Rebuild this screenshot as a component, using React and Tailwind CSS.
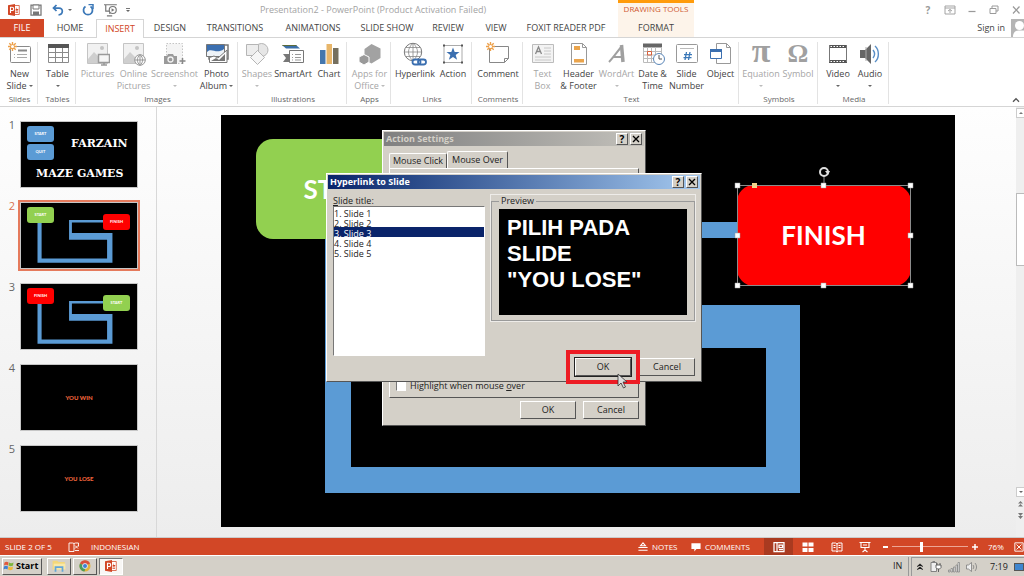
import React, { useState } from 'react';
import clsx from 'clsx';

/* ---------- small shared pieces ---------- */

function Icon({ children, className = 'size-6' }) {
  return (
    <svg viewBox="0 0 24 24" className={clsx('block shrink-0', className)} fill="none" aria-hidden="true">
      {children}
    </svg>
  );
}

function Caret({ className = 'text-[#666]' }) {
  return (
    <svg viewBox="0 0 4 2" className={clsx('inline-block h-0.5 w-1', className)} aria-hidden="true">
      <path d="M0 0h4L2 2z" fill="currentColor" />
    </svg>
  );
}

function Spark() {
  return (
    <g stroke="#eda04a" strokeWidth="1.4">
      <path d="M4.500 0v9M0 4.500h9M1.300 1.300l6.400 6.400M7.700 1.300l-6.400 6.400" />
      <circle cx="4.500" cy="4.500" r="1.500" fill="#fff" stroke="none" />
    </g>
  );
}

function PowerPointLogo({ className }) {
  return (
    <Icon className={className}>
      <path d="M12 3h10.500v18H12z" fill="#fff" stroke="#d24726" strokeWidth="1.500" />
      <path d="M15 14h5M15 17h5" stroke="#d24726" strokeWidth="1.500" />
      <path d="M17 6v4h4a4 4 0 0 1-6 2" fill="#d24726" />
      <path d="M0 2.500 14 0v24L0 21.500z" fill="#d24726" />
      <path d="M5 18V6.500h3.200a3.200 3.200 0 0 1 0 6.500H5" stroke="#fff" strokeWidth="2.200" />
    </Icon>
  );
}

/* ---------- ribbon icons ---------- */

const icons = {
  newSlide: (
    <Icon>
      <rect x="2.500" y="4.500" width="20" height="16" rx="1" stroke="#8a8a8a" fill="#fff" />
      <path d="M10 8.500h9" stroke="#8a8a8a" strokeWidth="2" />
      <path d="M6 12.500h1M9 12.500h10M6 15.500h1M9 15.500h10" stroke="#aaa" />
      <Spark />
    </Icon>
  ),
  table: (
    <Icon>
      <path d="M2 2h21v4H2z" fill="#555" />
      <path d="M2.500 6v14.500h20V6M2.500 10.500h20M2.500 15.500h20M9.500 6v14M16.500 6v14" stroke="#8a8a8a" />
    </Icon>
  ),
  pictures: (
    <Icon>
      <path d="M1.500 1.500h20v20h-20z" fill="#f1f1f1" stroke="#c4c4c4" />
      <circle cx="16" cy="6" r="2" fill="#c4c4c4" />
      <path d="M2 17l6-7 7 7v4H2z" fill="#cfcfcf" />
      <path d="M12.500 12.500h11v8h-11zM15 23h6M18 20v3" fill="#f6f6f6" stroke="#9a9a9a" strokeWidth="1.500" />
    </Icon>
  ),
  online: (
    <Icon>
      <path d="M1.500 1.500h20v20h-20z" fill="#f1f1f1" stroke="#c4c4c4" />
      <circle cx="15" cy="6" r="2" fill="#c4c4c4" />
      <path d="M2 17l6-7 7 7v4H2z" fill="#cfcfcf" />
      <circle cx="18" cy="18" r="5.300" fill="#fafafa" stroke="#999" />
      <path d="M12.700 18h10.600M18 12.700v10.600M18 12.700c-3.500 3-3.500 7.600 0 10.600M18 12.700c3.500 3 3.500 7.600 0 10.600" stroke="#999" />
    </Icon>
  ),
  screenshot: (
    <Icon>
      <path d="M3.500 1.500h16v20h-16z" fill="#f4f4f4" stroke="#c4c4c4" strokeDasharray="1.500 1.500" />
      <path d="M1 14h3l1-2h5l1 2h3v8H1z" fill="#9a9a9a" />
      <circle cx="7.500" cy="17.500" r="2.500" fill="#9a9a9a" stroke="#f1f1f1" strokeWidth="1.300" />
      <path d="M19.500 16v6M16.500 19h6" stroke="#888" strokeWidth="1.500" />
    </Icon>
  ),
  album: (
    <Icon>
      <path d="M4 3h19v14H4z" fill="#fff" stroke="#777" strokeWidth="1.500" />
      <path d="M1.500 2.500h18v12h-18z" fill="#3b6fb0" stroke="#777" />
      <path d="M2 10c5-5 9 3 17-3v7H2z" fill="#eef3f8" />
      <path d="M4.500 20.500v-5L9 14l4 2 9-8v12.500z" fill="#fff" stroke="#777" />
      <path d="M6 19l5-3 3 2 6-6v7z" fill="#777" />
    </Icon>
  ),
  shapes: (
    <Icon>
      <circle cx="16.500" cy="8" r="6.500" fill="#e6e6e6" stroke="#b5b5b5" />
      <path d="M1.500 2.500h12v11h-12z" fill="#ededed" stroke="#b5b5b5" />
      <path d="m12.500 8.500 7 7-7 7-7-7z" fill="#f6f6f6" stroke="#b5b5b5" />
    </Icon>
  ),
  smartArt: (
    <Icon>
      <path d="M1 3h14l4 3.500H5z" fill="#3b6fa8" />
      <path d="M1 3h14l1 1H2z" fill="#5c6b3a" />
      <path d="M2 12h7v8H2l3-4z" fill="#777" />
      <path d="M8.500 8.500h14v12h-14z" fill="#fff" stroke="#777" />
      <path d="M11 12.500h1M14 12.500h6M11 15.500h1M14 15.500h6M11 18h1M14 18h6" stroke="#999" />
    </Icon>
  ),
  chart: (
    <Icon>
      <path d="M3 8h5.500v14H3z" fill="#4577ad" />
      <path d="M9.500 2H15v20H9.500z" fill="#e8b66a" />
      <path d="M16 6h5.500v16H16z" fill="#76705f" />
    </Icon>
  ),
  apps: (
    <Icon>
      <path d="m13.500 2 9 4.500v9.500l-9 5.500-7-4V7z" fill="#a2a2a2" />
      <path d="m6 12.500 5 2.500v5l-5 3-5-3v-5z" fill="#9a9a9a" stroke="#fff" />
    </Icon>
  ),
  hyperlink: (
    <Icon>
      <circle cx="10" cy="10" r="8.700" fill="#fff" stroke="#777" />
      <path d="M1.500 10h17M3 5.500h14M3 14.500h14M10 1.300v17.400M10 1.300c-6 5-6 12.400 0 17.400M10 1.300c6 5 6 12.400 0 17.400" stroke="#888" strokeWidth="0.800" />
      <rect x="9.500" y="17.500" width="8" height="5" rx="2.500" stroke="#3b6fb0" strokeWidth="1.800" fill="#fff" />
      <rect x="15" y="17.500" width="8" height="5" rx="2.500" stroke="#3b6fb0" strokeWidth="1.800" />
    </Icon>
  ),
  action: (
    <Icon>
      <path d="M3 3.500h18v17H3z" stroke="#aaa" />
      <path d="M2 2.500h2v2H2zM20 2.500h2v2h-2zM2 19.500h2v2H2zM20 19.500h2v2h-2z" fill="#555" />
      <path d="m12 5.500 1.700 4.600h4.800l-3.800 3 1.400 4.600-4.100-2.800-4.100 2.800 1.400-4.600-3.800-3h4.800z" fill="#3b6fb0" />
    </Icon>
  ),
  comment: (
    <Icon>
      <path d="M3.500 4.500h19v12l-4 4h-15z" fill="#fff" stroke="#888" />
      <path d="M22.500 16.500h-4v4" stroke="#888" />
      <Spark />
    </Icon>
  ),
  textBox: (
    <Icon>
      <path d="M1.500 2.500h21v18h-21z" fill="#f3f3f3" stroke="#bcbcbc" />
      <path d="m4.500 12 3-7 3 7M5.500 9.500h4" stroke="#888" strokeWidth="1.300" />
      <path d="M13 6h7M13 9h7M13 12h7M4 15h16M4 18h16" stroke="#c8c8c8" />
    </Icon>
  ),
  headerFooter: (
    <Icon>
      <path d="M4.500 1.500h11l4 4v17h-15z" fill="#fff" stroke="#999" />
      <path d="M15.500 1.500v4h4" stroke="#999" />
      <path d="M7 4h6v4H7zM7 17h10v3.500H7z" fill="#eaa44c" />
    </Icon>
  ),
  wordArt: (
    <Icon>
      <path d="M4 20C8 16 12 10 17 4" stroke="#a0a0a0" strokeWidth="2" />
      <path d="M16.500 3 18 20" stroke="#a0a0a0" strokeWidth="3.500" />
      <path d="M8 15h10" stroke="#a0a0a0" strokeWidth="2" />
    </Icon>
  ),
  date: (
    <Icon>
      <path d="M2 1.500h19v4H2z" fill="#666" />
      <path d="M2.500 5v15.500h18V5M2.500 9.500h18M2.500 13h18M2.500 16.500h18M6.500 5v15M10.500 5v15M14.500 5v15" stroke="#bbb" />
      <path d="M6.500 9.500h4v3.500h-4z" stroke="#d9603a" />
      <circle cx="18" cy="17" r="5.500" fill="#fff" stroke="#5a86b8" />
      <path d="M18 13v4h3" stroke="#555" />
    </Icon>
  ),
  slideNumber: (
    <Icon>
      <rect x="1.500" y="2.500" width="21" height="18" rx="1" fill="#fff" stroke="#999" />
      <path d="M5 6.500h14" stroke="#bbb" />
      <path d="m11.500 10-1.500 8M15 10l-1.500 8M9 12.700h8M8.500 15.700h8" stroke="#3b78b8" strokeWidth="1.300" />
    </Icon>
  ),
  object: (
    <Icon>
      <path d="M7.500 1.500h10l4 4v16h-14z" fill="#fff" stroke="#999" />
      <path d="M17.500 1.500v4h4" stroke="#999" />
      <path d="M1.500 7.500h11v9h-11z" fill="#fff" stroke="#3b6fb0" />
      <path d="M1 7h12v3H1z" fill="#3b6fb0" />
    </Icon>
  ),
  equation: <span className="h-6 font-['Liberation_Serif',serif] text-[34px] leading-[18px] font-bold text-[#a0a0a0]">π</span>,
  symbol: <span className="h-6 font-['Liberation_Serif',serif] text-[26px] leading-6 font-bold text-[#a0a0a0]">Ω</span>,
  video: (
    <Icon>
      <path d="M3 3h18v3H3zM3 18h18v3H3z" fill="#555" />
      <path d="M3.500 3v17M20.500 3v17" stroke="#777" />
      <path d="M4.500 4.500h15M4.500 19.500h15" stroke="#fff" strokeDasharray="1.500 1.500" />
    </Icon>
  ),
  audio: (
    <Icon>
      <path d="M2 8h5l6-6v20l-6-6H2z" fill="#666" />
      <path d="M8 5v14" stroke="#aaa" />
      <path d="M15 8c2 2.500 2 5.500 0 8M17 4c4.500 4 4.500 12 0 16" stroke="#5a8fc6" strokeWidth="1.400" />
    </Icon>
  ),
};

const ribbon = [
  { name: 'Slides', width: 'w-[38px]', items: [{ icon: 'newSlide', lines: ['New', 'Slide'], caret: true, width: 'w-9' }] },
  { name: 'Tables', width: 'w-[38px]', items: [{ icon: 'table', lines: ['Table'], caret: true, width: 'w-9' }] },
  {
    name: 'Images',
    width: 'w-[162px]',
    items: [
      { icon: 'pictures', lines: ['Pictures'], off: true, width: 'w-9' },
      { icon: 'online', lines: ['Online', 'Pictures'], off: true, width: 'w-9' },
      { icon: 'screenshot', lines: ['Screenshot'], caret: true, off: true, width: 'w-[46px]' },
      { icon: 'album', lines: ['Photo', 'Album'], caret: true, width: 'w-[38px]' },
    ],
  },
  {
    name: 'Illustrations',
    width: 'w-[109px]',
    items: [
      { icon: 'shapes', lines: ['Shapes'], caret: true, off: true, width: 'w-[34px]' },
      { icon: 'smartArt', lines: ['SmartArt'], width: 'w-[38px]' },
      { icon: 'chart', lines: ['Chart'], width: 'w-[34px]' },
    ],
  },
  { name: 'Apps', width: 'w-11', items: [{ icon: 'apps', lines: ['Apps for', 'Office'], caret: true, off: true, width: 'w-[42px]' }] },
  {
    name: 'Links',
    width: 'w-[81px]',
    items: [
      { icon: 'hyperlink', lines: ['Hyperlink'], width: 'w-[42px]' },
      { icon: 'action', lines: ['Action'], width: 'w-[34px]' },
    ],
  },
  { name: 'Comments', width: 'w-[51px]', items: [{ icon: 'comment', lines: ['Comment'], width: 'w-[46px]' }] },
  {
    name: 'Text',
    width: 'w-[216px]',
    items: [
      { icon: 'textBox', lines: ['Text', 'Box'], off: true, width: 'w-[34px]' },
      { icon: 'headerFooter', lines: ['Header', '& Footer'], width: 'w-[38px]' },
      { icon: 'wordArt', lines: ['WordArt'], caret: true, off: true, width: 'w-[38px]' },
      { icon: 'date', lines: ['Date &', 'Time'], width: 'w-[34px]' },
      { icon: 'slideNumber', lines: ['Slide', 'Number'], width: 'w-[34px]' },
      { icon: 'object', lines: ['Object'], width: 'w-[34px]' },
    ],
  },
  {
    name: 'Symbols',
    width: 'w-[79px]',
    items: [
      { icon: 'equation', lines: ['Equation'], caret: true, off: true, width: 'w-[38px]' },
      { icon: 'symbol', lines: ['Symbol'], off: true, width: 'w-9' },
    ],
  },
  {
    name: 'Media',
    width: 'w-[71px]',
    items: [
      { icon: 'video', lines: ['Video'], caret: true, width: 'w-8' },
      { icon: 'audio', lines: ['Audio'], caret: true, width: 'w-8' },
    ],
  },
];

const tabs = [
  { label: 'HOME', width: 'w-[52px]' },
  { label: 'INSERT', width: 'w-12', active: true },
  { label: 'DESIGN', width: 'w-[52px]' },
  { label: 'TRANSITIONS', width: 'w-[78px]' },
  { label: 'ANIMATIONS', width: 'w-[78px]' },
  { label: 'SLIDE SHOW', width: 'w-[70px]' },
  { label: 'REVIEW', width: 'w-[52px]' },
  { label: 'VIEW', width: 'w-[44px]' },
  { label: 'FOXIT READER PDF', width: 'w-24' },
];

/* ---------- header ---------- */

function TitleBar() {
  return (
    <div className="flex h-[19px] items-stretch">
      <div className="flex w-[618px] shrink-0 items-center">
        <div className="flex w-[128px] items-center pl-2">
          <PowerPointLogo className="size-3" />
          <button aria-label="Save" className="ml-2.5">
            <Icon className="size-3">
              <path d="M2 2h20v20H2z" stroke="#777" strokeWidth="2.500" />
              <path d="M6 2h12v8H6z" fill="#fff" stroke="#777" strokeWidth="2" />
              <path d="M6 15h12v7H6z" fill="#777" />
            </Icon>
          </button>
          <button aria-label="Undo" className="ml-2.5 flex items-center gap-1">
            <Icon className="size-3">
              <path d="M9 2 3 8l6 6M3 8h11c9 0 9 13-1 14" stroke="#3b78b8" strokeWidth="3.500" />
            </Icon>
            <Caret />
          </button>
          <button aria-label="Redo" className="ml-2.5">
            <Icon className="size-3">
              <path d="M7 5a9 9 0 1 0 10 0" stroke="#3b78b8" strokeWidth="3.500" />
              <path d="M13 1h9v9" stroke="#3b78b8" strokeWidth="3" />
            </Icon>
          </button>
          <button aria-label="Start slide show" className="ml-2.5">
            <Icon className="size-3.5">
              <path d="M0 3h22M3 4v10h6M10 14v5M5 22h9" stroke="#777" strokeWidth="2" />
              <circle cx="15" cy="12" r="6" fill="#fff" stroke="#777" strokeWidth="2" />
              <path d="m13 9 5 3-5 3z" fill="#777" />
            </Icon>
          </button>
          <button aria-label="Customize toolbar" className="ml-2 flex flex-col items-center gap-px">
            <span className="h-px w-1 bg-[#777]" />
            <Caret />
          </button>
        </div>
        <h1 className="flex-1 text-center text-[9px] text-[#a3a3a3]">Presentation2 - PowerPoint (Product Activation Failed)</h1>
      </div>
      <div className="w-[76px] shrink-0 border-t-[3px] border-[#ff9b0b] bg-[#fdf4ea] text-center text-[8px] leading-3 whitespace-nowrap text-[#cf5a33]">
        DRAWING TOOLS
      </div>
      <div className="ml-auto flex w-[102px] items-center justify-between pr-0.5 text-[#9a9a9a]">
        <button aria-label="Help" className="w-3 text-[10px] font-bold leading-3">?</button>
        <button aria-label="Ribbon display options">
          <Icon className="size-3">
            <path d="M2 4h20v16H2zM2 8h20M12 18v-7M8 14l4-3 4 3" stroke="currentColor" strokeWidth="1.800" />
          </Icon>
        </button>
        <button aria-label="Minimize">
          <Icon className="size-3">
            <path d="M5 15h14" stroke="currentColor" strokeWidth="2.500" />
          </Icon>
        </button>
        <button aria-label="Restore">
          <Icon className="size-3">
            <path d="M8 8V4h12v10h-4M4 9h12v10H4z" stroke="currentColor" strokeWidth="2" />
          </Icon>
        </button>
        <button aria-label="Close">
          <Icon className="size-3">
            <path d="m6 5 13 14M19 5 6 19" stroke="currentColor" strokeWidth="2.500" />
          </Icon>
        </button>
      </div>
    </div>
  );
}

function TabRow() {
  return (
    <nav className="flex h-[19px] items-stretch border-b border-[#d5d5d5] text-[9px] text-[#444]">
      <button className="w-11 shrink-0 bg-[#d24726] text-white">FILE</button>
      {tabs.map((tab) => (
        <button
          key={tab.label}
          className={clsx(
            'shrink-0 whitespace-nowrap',
            tab.width,
            tab.active && '-mb-px border border-b-0 border-[#d5d5d5] bg-white text-[#d24726]',
          )}
        >
          {tab.label}
        </button>
      ))}
      <div className="w-1 shrink-0" />
      <button className="w-[76px] shrink-0 bg-[#fdf4ea]">FORMAT</button>
      <a href="#signin" className="ml-auto flex items-center gap-1.5 whitespace-nowrap">
        Sign in
        <svg viewBox="0 0 13 18" className="h-[18px] w-[13px]" aria-hidden="true">
          <path d="M0 0h13v18H0z" fill="#b5b5b5" />
          <circle cx="8.500" cy="6.500" r="4.500" fill="#fff" />
          <path d="M2 18c0-5 3-7 6.500-6.500H13V18z" fill="#fff" />
        </svg>
      </a>
    </nav>
  );
}

function RibbonItem({ icon, lines, caret, off, width }) {
  return (
    <button className={clsx('flex shrink-0 flex-col items-center', width, off ? 'text-[#a6a6a6]' : 'text-[#444]')}>
      {icons[icon]}
      <span className="mt-0.5 whitespace-nowrap">{lines[0]}</span>
      <span className="flex h-3 items-center gap-0.5 whitespace-nowrap">
        {lines[1]}
        {caret && <Caret className={off ? 'text-[#bbb]' : 'text-[#666]'} />}
      </span>
    </button>
  );
}

function Ribbon() {
  return (
    <div className="flex h-[69px] border-b border-[#d5d5d5] pt-1 pb-0.5 text-[9px] leading-3">
      {ribbon.map((group) => (
        <section key={group.name} className={clsx('flex shrink-0 flex-col border-r border-[#e3e3e3] pl-0.5', group.width)}>
          <div className="flex flex-1 justify-center">
            {group.items.map((item) => (
              <RibbonItem key={item.icon} {...item} />
            ))}
          </div>
          <div className="text-center text-[8px] leading-[10px] text-[#666]">{group.name}</div>
        </section>
      ))}
      <button aria-label="Collapse the ribbon" className="mt-auto ml-auto pr-1">
        <Icon className="size-2">
          <path d="m3 17 9-9 9 9" stroke="#555" strokeWidth="4" />
        </Icon>
      </button>
    </div>
  );
}

/* ---------- slides ---------- */

function Maze() {
  return (
    <svg viewBox="0 0 734 412" className="absolute inset-0 size-full" aria-hidden="true">
      <path
        d="M104 110h26v242h415V233H304V107h240v16H322v67h257v188H104z"
        fill="#5b9bd5"
      />
    </svg>
  );
}

function MiniShape({ label, className }) {
  return (
    <span
      className={clsx(
        'absolute flex h-4 w-[27px] items-center justify-center rounded-[3px] text-[4px] font-bold text-white',
        className,
      )}
    >
      {label}
    </span>
  );
}

const slides = [
  <>
    <MiniShape label="START" className="left-1.5 top-1 bg-[#5b9bd5]" />
    <MiniShape label="QUIT" className="left-1.5 top-[22px] bg-[#5b9bd5]" />
    <span className="absolute left-[50px] top-4 font-['DejaVu_Serif',serif] text-[11px] leading-3 font-bold text-white">FARZAIN</span>
    <span className="absolute left-[15px] top-[46px] font-['DejaVu_Serif',serif] text-[11px] leading-3 font-bold whitespace-nowrap text-white">
      MAZE GAMES
    </span>
  </>,
  <>
    <Maze />
    <MiniShape label="START" className="left-1.5 top-1 bg-[#92d050]" />
    <MiniShape label="FINISH" className="left-[82px] top-[11px] bg-[#f00]" />
  </>,
  <>
    <Maze />
    <MiniShape label="FINISH" className="left-1.5 top-1 bg-[#f00]" />
    <MiniShape label="START" className="left-[82px] top-[11px] bg-[#92d050]" />
  </>,
  <span className="text-[6px] font-black text-[#f0643c]">YOU WIN</span>,
  <span className="text-[6px] font-black text-[#f0643c]">YOU LOSE</span>,
];

function Thumbnails() {
  return (
    <aside className="w-[157px] shrink-0 border-r border-[#d8d8d8] pt-3">
      <ol className="flex flex-col gap-2.5">
        {slides.map((content, i) => (
          <li key={i} className="flex">
            <span className={clsx('w-[18px] pr-[3px] text-right text-[11px] leading-3', i === 1 ? 'text-[#d9704f]' : 'text-[#666]')}>
              {i + 1}
            </span>
            <button
              aria-label={`Slide ${i + 1}`}
              className={clsx('border-2 font-[Lato,sans-serif]', i === 1 ? 'border-[#e57a5c]' : 'border-transparent')}
            >
              <span className="relative flex h-[67px] w-[118px] items-center justify-center overflow-hidden border border-[#c6c6c6] bg-black">
                {content}
              </span>
            </button>
          </li>
        ))}
      </ol>
    </aside>
  );
}

function SelectionFrame() {
  return (
    <svg viewBox="0 0 182 124" className="absolute -left-1 -top-5 h-[124px] w-[182px]" aria-hidden="true">
      <path d="M4.500 20.500h173v100H4.500zM91 11v9" fill="none" stroke="#8c8c8c" />
      <circle cx="91" cy="7" r="4" fill="none" stroke="#ddd" strokeWidth="2" />
      <path d="m92 6 5 0-2 4z" fill="#ddd" />
      <path d="M2 18h5v5H2zM88 18h5v5h-5zM175 18h5v5h-5zM2 68h5v5H2zM175 68h5v5h-5zM2 118h5v5H2zM88 118h5v5h-5zM175 118h5v5h-5z" fill="#fff" stroke="#999" strokeWidth="0.500" />
      <path d="M19 18h5v5h-5z" fill="#f3d38b" />
    </svg>
  );
}

function SlideCanvas() {
  return (
    <main className="flex min-w-0 flex-1 justify-center pt-2 pl-0.5">
      <div className="relative mb-2.5 h-[412px] w-[734px] shrink-0 bg-black font-[Lato,sans-serif] text-[26px] font-bold text-white">
        <Maze />
        <div className="absolute left-[35px] top-6 flex h-[100px] w-[174px] items-center justify-center rounded-[17px] bg-[#92d050]">
          START
        </div>
        <div className="absolute left-[516px] top-[70px] flex h-[101px] w-[174px] items-center justify-center rounded-[17px] bg-[#f00]">
          FINISH
          <SelectionFrame />
        </div>
      </div>
    </main>
  );
}

function ScrollBar() {
  return (
    <div className="flex w-2 shrink-0 flex-col bg-[#efefef] text-[#777]" aria-hidden="true">
      <div className="mt-px flex h-2.5 items-center justify-center border border-r-0 border-[#ccc] bg-white">
        <Caret className="rotate-180" />
      </div>
      <div className="mt-[75px] h-[73px] border border-r-0 border-[#bbb] bg-white" />
      <div className="mt-auto flex h-2.5 items-center justify-center border border-r-0 border-[#ccc] bg-white">
        <Caret />
      </div>
      <div className="flex h-10 flex-col items-center gap-1.5 pt-1">
        <svg viewBox="0 0 5 6" className="h-1.5 w-[5px]">
          <path d="M2.500 0 5 2.500H0zM2.500 3 5 5.500H0z" fill="currentColor" />
        </svg>
        <svg viewBox="0 0 5 6" className="h-1.5 w-[5px]">
          <path d="M2.500 3 5 0H0zM2.500 6 5 3H0z" fill="currentColor" />
        </svg>
      </div>
    </div>
  );
}

/* ---------- dialogs ---------- */

const raised = 'border border-t-white border-l-white border-r-[#555] border-b-[#555] bg-[#d4d0c8]';
const sunken = 'border border-t-[#777] border-l-[#777] border-r-white border-b-white';

function DialogButton({ children, isDefault = false }) {
  return (
    <button className={clsx('h-[18px] w-14 text-center', raised, isDefault && 'outline outline-[#222]')}>{children}</button>
  );
}

function DialogTitle({ children, active }) {
  return (
    <div
      className={clsx(
        'flex h-3.5 items-center gap-0.5 bg-linear-to-r px-0.5 font-bold',
        active ? 'from-[#0a246a] to-[#a6caf0] text-white' : 'from-[#808080] to-[#c3c1bb] text-[#d4d0c8]',
      )}
    >
      <span className="flex-1">{children}</span>
      <button aria-label="Help" className={clsx('flex size-3 items-center justify-center text-[10px] leading-none text-black', raised)}>
        ?
      </button>
      <button aria-label="Close" className={clsx('flex size-3 items-center justify-center text-black', raised)}>
        <Icon className="size-2">
          <path d="m3 3 18 18M21 3 3 21" stroke="currentColor" strokeWidth="4" />
        </Icon>
      </button>
    </div>
  );
}

function ActionSettingsDialog() {
  return (
    <section
      aria-label="Action Settings"
      className={clsx('absolute left-[382px] top-[130px] flex h-[296px] w-[264px] flex-col p-px text-[9px] leading-3 text-[#222]', raised)}
    >
      <DialogTitle>Action Settings</DialogTitle>
      <div className="flex flex-1 flex-col px-[5px] pt-[5px] pb-[5px]">
        <div className="flex items-end">
          <button className={clsx('h-[15px] w-[58px] rounded-t-xs border-b-0 whitespace-nowrap', raised)}>Mouse Click</button>
          <button className={clsx('-mb-px h-[18px] w-[61px] rounded-t-xs whitespace-nowrap', raised, 'border-b-[#d4d0c8]')}>Mouse Over</button>
        </div>
        <div className={clsx('mb-[3px] flex flex-1 items-end px-1.5 pb-[5px]', raised)}>
          <label className="flex items-center gap-1">
            <input type="checkbox" className={clsx('size-2.5 appearance-none bg-white', sunken)} />
            <span>
              Highlight when mouse <u>o</u>ver
            </span>
          </label>
        </div>
        <div className="flex justify-end gap-[7px]">
          <DialogButton>OK</DialogButton>
          <DialogButton>Cancel</DialogButton>
        </div>
      </div>
    </section>
  );
}

function HyperlinkDialog() {
  const [slide, setSlide] = useState('3');

  return (
    <section
      aria-label="Hyperlink to Slide"
      className={clsx('absolute left-[326px] top-[173px] flex h-[209px] w-[376px] flex-col p-px text-[9px] leading-3 text-[#222]', raised)}
    >
      <DialogTitle active>Hyperlink to Slide</DialogTitle>
      <div className="flex flex-1 justify-between px-[5px] pt-1.5 pb-1">
        <div className="flex flex-col">
          <label htmlFor="slide-title" className="leading-[11px]">
            <u>S</u>lide title:
          </label>
          <select
            id="slide-title"
            size={14}
            value={slide}
            onChange={(e) => setSlide(e.target.value)}
            className={clsx('h-[150px] w-[152px] appearance-none overflow-hidden bg-white outline-none', sunken)}
          >
            {[1, 2, 3, 4, 5].map((n) => (
              <option
                key={n}
                value={n}
                className="h-2.5 min-h-0 p-0 text-[9px] leading-[10px] text-[#222] checked:bg-[linear-gradient(#0a246a,#0a246a)] checked:text-white"
              >
                {n}. Slide {n}
              </option>
            ))}
          </select>
        </div>
        <div className="flex w-[204px] flex-col justify-between">
          <fieldset className="border border-[#9a9a9a] px-[7px] pt-0.5 pb-[5px] outline outline-white/60">
            <legend className="px-0.5 leading-3">Preview</legend>
            <div className="h-[106px] bg-black px-2 pt-1.5 font-['Liberation_Sans',sans-serif] text-[22px] leading-[26px] font-bold text-white">
              PILIH PADA
              <br />
              SLIDE
              <br />
              "YOU LOSE"
            </div>
          </fieldset>
          <div className="flex justify-end gap-2">
            <DialogButton isDefault>OK</DialogButton>
            <DialogButton>Cancel</DialogButton>
          </div>
        </div>
      </div>
      {/* highlight round the OK button, with the mouse pointer */}
      <div className="pointer-events-none absolute right-[61px] bottom-[-3px] h-[34px] w-[74px] border-4 border-[#ed1c24]" />
      <svg viewBox="0 0 10 16" className="pointer-events-none absolute left-[290px] top-[199px] h-4 w-2.5" aria-hidden="true">
        <path d="M1 1v12l3-3 2.500 5 2-1L6 9h4z" fill="#ddd" stroke="#333" strokeWidth="0.800" />
      </svg>
    </section>
  );
}

/* ---------- bottom bars ---------- */

function StatusBar() {
  return (
    <footer className="flex h-[17px] shrink-0 items-center bg-[#d24726] text-[8px] leading-3 whitespace-nowrap text-white">
      <span className="w-[68px] pl-[5px]">SLIDE 2 OF 5</span>
      <Icon className="size-3">
        <path d="M12 5v16H2V4h7zM12 5l3-1h6v7M22 19h-8" stroke="currentColor" strokeWidth="1.800" />
        <path d="m14 9 6 6M20 9l-6 6" stroke="currentColor" strokeWidth="1.800" />
      </Icon>
      <span className="pl-[11px]">INDONESIAN</span>
      <div className="ml-auto flex h-full items-center">
        <button className="flex w-[53px] items-center gap-1">
          <Icon className="size-2.5">
            <path d="M12 2 6 9h12zM1 13h22M1 20h22" stroke="currentColor" strokeWidth="2.500" />
          </Icon>
          NOTES
        </button>
        <button className="flex w-[73px] items-center gap-1">
          <Icon className="size-2.5">
            <path d="M1 3h22v14H13l-5 6v-6H1z" fill="currentColor" />
          </Icon>
          COMMENTS
        </button>
        <button aria-label="Normal view" className="flex h-full w-[29px] items-center justify-center bg-[#a93a20]">
          <Icon className="size-3">
            <path d="M2 3h20v18H2zM8 3v18M12 8h7v5h-7zM12 17h8" stroke="currentColor" strokeWidth="2.500" />
          </Icon>
        </button>
        <button aria-label="Slide sorter" className="flex w-[29px] justify-center">
          <Icon className="size-3">
            <path d="M1 3h10v8H1zM13 3h10v8H13zM1 14h10v8H1zM13 14h10v8H13z" fill="currentColor" />
          </Icon>
        </button>
        <button aria-label="Reading view" className="flex w-[29px] justify-center">
          <Icon className="size-3">
            <path d="M12 5v17M2 4h7l3 2 3-2h7v16h-7l-3 2-3-2H2zM5 9h4M5 13h4M15 9h4M15 13h4" stroke="currentColor" strokeWidth="2" />
          </Icon>
        </button>
        <button aria-label="Slide show" className="flex w-7 justify-center">
          <Icon className="size-3">
            <path d="M1 3h22M4 4v9h16V4M12 13v5M7 22l5-4 5 4M8 8h8" stroke="currentColor" strokeWidth="2.200" />
          </Icon>
        </button>
        <button aria-label="Zoom out" className="ml-1 h-0.5 w-[5px] bg-white" />
        <input
          type="range"
          aria-label="Zoom"
          min="10"
          max="180"
          defaultValue="76"
          className="mx-1 h-3 w-[76px] appearance-none bg-[linear-gradient(#eda695,#eda695)] bg-size-[100%_1px] bg-center bg-no-repeat [&::-webkit-slider-thumb]:h-2.5 [&::-webkit-slider-thumb]:w-[3px] [&::-webkit-slider-thumb]:appearance-none [&::-webkit-slider-thumb]:bg-white"
        />
        <button aria-label="Zoom in">
          <Icon className="size-1.5">
            <path d="M12 0v24M0 12h24" stroke="currentColor" strokeWidth="6" />
          </Icon>
        </button>
        <span className="w-9 pl-2.5">76%</span>
        <button aria-label="Fit to window">
          <Icon className="size-2.5">
            <path d="M2 2h20v20H2zM6 6l12 12M18 6 6 18" stroke="currentColor" strokeWidth="2.200" />
          </Icon>
        </button>
      </div>
    </footer>
  );
}

function TaskBar() {
  return (
    <div className="flex h-[21px] shrink-0 items-center gap-0.5 border-t border-white bg-[#d4d0c8] pl-0.5 text-[9px] leading-3 text-[#222]">
      <button className={clsx('mr-[3px] flex h-[17px] w-10 items-center gap-px font-bold text-black', raised)}>
        <Icon className="size-3">
          <path d="M3 5c3-2 5-2 8 0l-1 6c-3-2-5-2-8 0z" fill="#e2583a" />
          <path d="M12 5c3 2 6 2 9 0l-1 6c-3 2-6 2-9 0z" fill="#7db53c" />
          <path d="M2 13c3-2 5-2 8 0l-1 6c-3-2-5-2-8 0z" fill="#3f7fd0" />
          <path d="M11 13c3 2 6 2 9 0l-1 6c-3 2-6 2-9 0z" fill="#f0b93a" />
        </Icon>
        Start
      </button>
      <button aria-label="File Explorer" className={clsx('flex h-[17px] w-6 items-center justify-center', raised)}>
        <Icon className="size-3.5">
          <path d="M1 3h8l2 2h11v13H1z" fill="#f3d77a" />
          <path d="M3 8h20v10H3z" fill="#f8e8a8" />
          <path d="M6 22v-8h12v8M6 14h12" stroke="#62a5d8" strokeWidth="3" />
        </Icon>
      </button>
      <button aria-label="Chrome" className={clsx('flex h-[17px] w-6 items-center justify-center', raised)}>
        <Icon className="size-3">
          <circle cx="12" cy="12" r="11" fill="#e0b23c" />
          <path d="M2 7a11 11 0 0 1 20 0L12 12z" fill="#d9503c" />
          <path d="M2 7a11 11 0 0 0 9 16l3-10z" fill="#4c9b58" />
          <circle cx="12" cy="12" r="5" fill="#3f7fd0" stroke="#fff" strokeWidth="1.500" />
        </Icon>
      </button>
      <button aria-label="PowerPoint" className={clsx('flex h-[17px] w-6 items-center justify-center bg-[#f8f7f5]', sunken)}>
        <PowerPointLogo className="size-3" />
      </button>
      <div className="ml-auto flex h-full items-center">
        <span className="w-[15px]">IN</span>
        <div className="flex h-[19px] items-center border-l border-[#999] pl-0.5">
          <div className="flex h-full w-[113px] items-center border-t border-l border-[#999] pl-1">
            <Icon className="size-2">
              <path d="m4 11 8-7 8 7M4 20l8-7 8 7" stroke="#222" strokeWidth="3.500" />
            </Icon>
            <Icon className="ml-1.5 size-3">
              <path d="M2 3h11v18H2zM5 1h5" fill="#eee" stroke="#777" strokeWidth="1.800" />
              <path d="M12 8h10v5l-3 3h-4l-3-3zM14 4v4M20 4v4M17 16v6" fill="#fff" stroke="#555" strokeWidth="1.800" />
            </Icon>
            <Icon className="ml-1.5 size-3">
              <path d="M1 22v-4h3v4zM6 22v-7h3v7zM11 22V12h3v10zM16 22V8h3v14zM20 22V3h3v19z" fill="#eee" stroke="#777" strokeWidth="1.300" />
            </Icon>
            <Icon className="ml-1.5 size-3">
              <path d="M1 8h4l6-5v18l-6-5H1z" fill="#eee" stroke="#777" strokeWidth="1.500" />
              <path d="M14 8c2 3 2 5 0 8M18 4c4 5 4 11 0 16" stroke="#888" strokeWidth="1.800" />
            </Icon>
            <time className="ml-3 whitespace-nowrap">7:19</time>
            <div className="ml-auto h-2 w-2.5 border border-[#555] bg-[#3f86cf]" />
          </div>
        </div>
      </div>
    </div>
  );
}

export default function App() {
  return (
    <div className="relative flex min-h-screen flex-col overflow-hidden bg-white font-['Open_Sans','Noto_Sans',sans-serif]">
      <header className="shrink-0">
        <TitleBar />
        <TabRow />
        <Ribbon />
      </header>
      <div className="flex flex-1 border-b border-[#ccc] bg-linear-to-b from-[#fefefe] to-[#ededed]">
        <Thumbnails />
        <SlideCanvas />
        <ScrollBar />
      </div>
      <StatusBar />
      <TaskBar />
      <ActionSettingsDialog />
      <HyperlinkDialog />
    </div>
  );
}
